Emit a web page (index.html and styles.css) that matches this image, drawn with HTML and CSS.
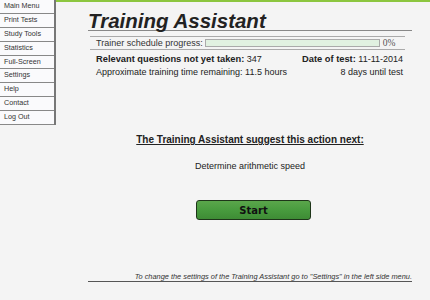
FILE: index.html
```html
<!DOCTYPE html>
<html>
<head>
<meta charset="utf-8">
<link rel="stylesheet" href="styles.css">
</head>
<body>
<div class="page">
  <nav class="menu">
    <div class="item">Main Menu</div>
    <div class="item">Print Tests</div>
    <div class="item">Study Tools</div>
    <div class="item">Statistics</div>
    <div class="item">Full-Screen</div>
    <div class="item">Settings</div>
    <div class="item">Help</div>
    <div class="item">Contact</div>
    <div class="item">Log Out</div>
  </nav>
  <main class="main">
    <h1 class="title">Training Assistant</h1>
    <div class="progress">
      <span class="plabel">Trainer schedule progress:</span>
      <span class="bar"></span>
      <span class="pct">0%</span>
    </div>
    <div class="info">
      <div class="row">
        <span><b>Relevant questions not yet taken:</b> 347</span>
        <span><b>Date of test:</b> 11-11-2014</span>
      </div>
      <div class="row">
        <span>Approximate training time remaining: 11.5 hours</span>
        <span>8 days until test</span>
      </div>
    </div>
    <div class="suggest">
      <div class="headline">The Training Assistant suggest this action next:</div>
      <div class="action">Determine arithmetic speed</div>
      <button class="start">Start</button>
    </div>
    <div class="footer"><span>To change the settings of the Training Assistant go to "Settings" in the left side menu.</span></div>
  </main>
</div>
</body>
</html>
```

FILE: styles.css
```css
html, body {
  margin: 0;
  padding: 0;
  background: #f4f4f4;
  font-family: "Liberation Sans", Arial, sans-serif;
  color: #222;
}
.page {
  display: flex;
  width: 430px;
  height: 300px;
  overflow: hidden;
}
.menu {
  width: 54px;
  flex: none;
  align-self: flex-start;
  border-right: 2px solid #777;
  background: #fafafc;
}
.item {
  height: 12.9px;
  line-height: 12.9px;
  border-bottom: 1px solid #888;
  font-size: 7.2px;
  color: #333;
  padding-left: 4px;
  white-space: nowrap;
}
.main {
  flex: 1;
  border-top: 2px solid #8cc63f;
  padding: 0 18px 0 32px;
  display: flex;
  flex-direction: column;
}
.title {
  margin: 9px 0 0 0;
  font-size: 20.5px;
  font-style: italic;
  font-weight: bold;
  line-height: 19px;
  color: #222;
  border-bottom: 1.5px solid #888;
}
.progress {
  margin: 5px 7px 0 2px;
  border-top: 1.5px solid #aaa;
  border-bottom: 1.5px solid #aaa;
  height: 12px;
  display: flex;
  align-items: center;
  font-size: 9px;
  color: #333;
  padding-left: 6px;
}
.plabel {
  white-space: nowrap;
}
.bar {
  width: 173px;
  height: 6px;
  margin-left: 2px;
  border: 1px solid #aaa;
  background: #e1f1e1;
}
.pct {
  margin-left: 3px;
  font-family: "Liberation Serif", serif;
  font-size: 9.5px;
  color: #555;
}
.info {
  margin: 3px 9px 0 8px;
  font-size: 9px;
  color: #222;
}
.row {
  display: flex;
  justify-content: space-between;
  height: 13px;
  line-height: 13px;
}
.row b {
  font-size: 9.3px;
}
.suggest {
  display: flex;
  flex-direction: column;
  align-items: center;
  margin-top: 55px;
}
.headline {
  font-size: 10px;
  font-weight: bold;
  text-decoration: underline;
  color: #222;
  line-height: 12px;
}
.action {
  font-size: 9px;
  margin-top: 14px;
  line-height: 12px;
  color: #222;
}
.start {
  margin-top: 28px;
  margin-left: 7px;
  width: 115px;
  height: 20px;
  border: 1px solid #1e3519;
  border-radius: 3px;
  background: linear-gradient(180deg, #5aa64b 0%, #479a3d 55%, #3e8c35 100%);
  font-family: "DejaVu Sans", sans-serif;
  font-weight: bold;
  font-size: 10px;
  color: #111;
  padding: 0;
}
.footer {
  margin-top: auto;
  margin-bottom: 18px;
  border-bottom: 1px solid #555;
  text-align: right;
  font-size: 7.4px;
  font-style: italic;
  line-height: 9px;
  color: #333;
}
```
